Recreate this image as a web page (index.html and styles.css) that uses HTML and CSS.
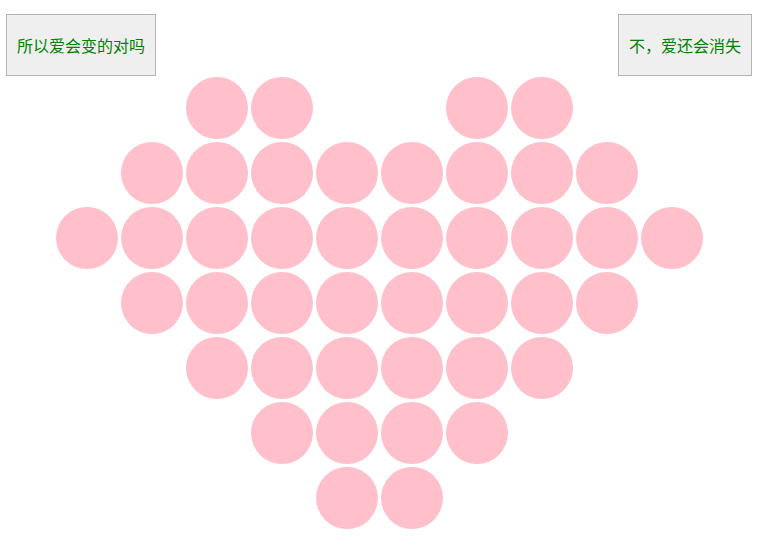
FILE: index.html
```html
<!DOCTYPE html>
<html lang="zh-CN">
<head>
    <meta charset="UTF-8">
    <title>Heart</title>
    <link rel="stylesheet" href="styles.css">
</head>
<body>
    <div class="top">
        <button class="btn">所以爱会变的对吗</button>
        <button class="btn">不，爱还会消失</button>
    </div>
    <div class="heart">
        <i class="s3"></i><i></i><i class="s7"></i><i></i>
        <i class="s2"></i><i></i><i></i><i></i><i></i><i></i><i></i><i></i>
        <i class="s1"></i><i></i><i></i><i></i><i></i><i></i><i></i><i></i><i></i><i></i>
        <i class="s2"></i><i></i><i></i><i></i><i></i><i></i><i></i><i></i>
        <i class="s3"></i><i></i><i></i><i></i><i></i><i></i>
        <i class="s4"></i><i></i><i></i><i></i>
        <i class="s5"></i><i></i>
    </div>
</body>
</html>
```

FILE: styles.css
```css
*{margin: 0;padding: 0;}
body{font-size: 16px;font-family: "Liberation Sans", "Noto Sans CJK SC", sans-serif;background: #fff;}
.top{display: flex;justify-content: space-between;padding: 14px 22px 0 6px;}
.btn{height: 62px;padding: 0 10px;background: #efefef;border: 1px solid #b3b3bb;color: #008000;font-size: 16px;font-family: "Noto Sans CJK SC", sans-serif;}
.heart{display: grid;grid-template-columns: repeat(10, 62px);grid-auto-rows: 62px;gap: 3px;margin: 1px 0 0 56px;}
.heart i{display: block;border-radius: 50%;background: pink;}
.heart .s1{grid-column-start: 1;}
.heart .s2{grid-column-start: 2;}
.heart .s3{grid-column-start: 3;}
.heart .s4{grid-column-start: 4;}
.heart .s5{grid-column-start: 5;}
.heart .s7{grid-column-start: 7;}
```
